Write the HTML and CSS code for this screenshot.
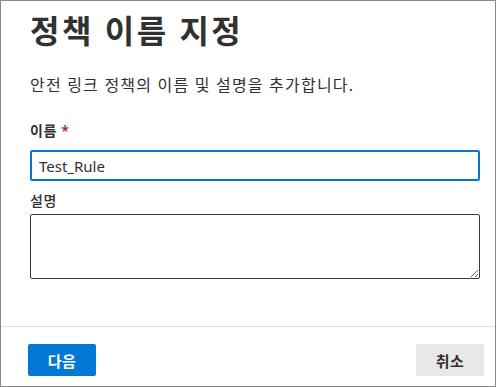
FILE: index.html
```html
<!DOCTYPE html>
<html lang="ko">
<head>
  <meta charset="UTF-8" />
  <title>정책 이름 지정</title>
  <link rel="stylesheet" href="styles.css">
</head>
<body>
  <div class="panel">
    <div class="panel-body">
      <h1 class="panel-title">정책 이름 지정</h1>
      <p class="panel-desc">안전 링크 정책의 이름 및 설명을 추가합니다.</p>

      <label for="policyName" class="form-label">이름 <span class="required">*</span></label>
      <input type="text" id="policyName" class="input-field" value="Test_Rule" />

      <label for="policyDesc" class="form-label form-label-light">설명</label>
      <textarea id="policyDesc" class="textarea-field"></textarea>
    </div>

    <!-- Footer actions -->
    <div class="panel-footer">
      <button class="btn btn-primary">다음</button>
      <button class="btn btn-default">취소</button>
    </div>
  </div>
</body>
</html>
```

FILE: styles.css
```css
* {
  box-sizing: border-box;
  margin: 0;
  padding: 0;
  font-family: 'Noto Sans', 'Noto Sans CJK KR', sans-serif;
}

body {
  background-color: #ffffff;
  color: #323130;
}

.panel {
  width: 496px;
  height: 387px;
  border: 1px solid #8a8a8a;
  display: flex;
  flex-direction: column;
}

.panel-body {
  flex: 1;
  padding: 10px 15px 0 29px;
  display: flex;
  flex-direction: column;
  align-items: flex-start;
}

.panel-title {
  font-size: 32px;
  font-weight: 700;
  line-height: 40px;
  letter-spacing: 2.5px;
  color: #323130;
}

.panel-desc {
  font-size: 16px;
  line-height: 20px;
  letter-spacing: 1.2px;
  margin-top: 24px;
}

.form-label {
  display: block;
  font-size: 14px;
  font-weight: 600;
  line-height: 20px;
  letter-spacing: 0.6px;
  margin-top: 26px;
  margin-bottom: 9px;
}

.form-label-light {
  font-weight: 500;
  margin-top: 10px;
  margin-bottom: 3px;
}

.required {
  color: #a4262c;
}

.input-field {
  width: 450px;
  height: 31px;
  padding: 0 7px;
  border: 2px solid #0078d4;
  border-radius: 2px;
  font-size: 15px;
  color: #323130;
  outline: none;
}

.textarea-field {
  width: 450px;
  height: 65px;
  border: 1px solid #3b3a39;
  border-radius: 2px;
  resize: vertical;
}

/* Footer */
.panel-footer {
  border-top: 1px solid #e1e1e1;
  height: 60px;
  padding: 17px 11px 0 27px;
  display: flex;
  justify-content: space-between;
  align-items: flex-start;
}

.btn {
  width: 68px;
  height: 32px;
  border: none;
  border-radius: 2px;
  font-size: 15px;
  font-weight: 600;
  letter-spacing: 0.5px;
  cursor: pointer;
}

.btn-primary {
  background: #0078d4;
  color: #ffffff;
}

.btn-default {
  background: #e8e8e8;
  color: #323130;
}
```
